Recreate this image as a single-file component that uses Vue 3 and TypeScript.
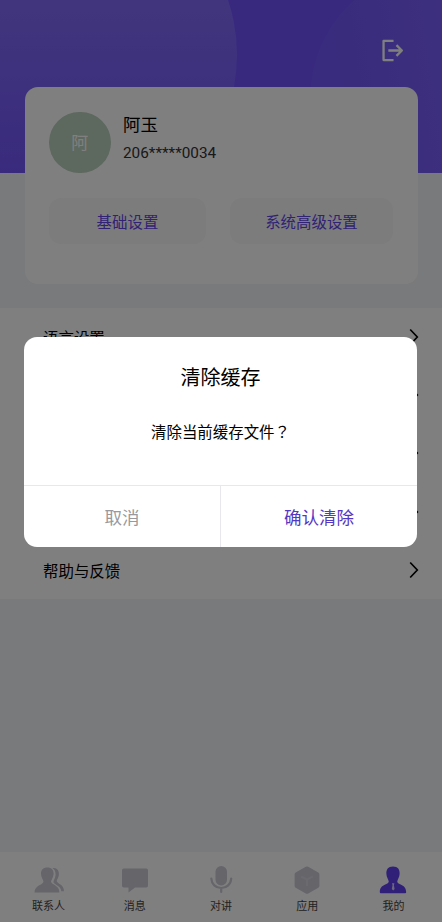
<script setup lang="ts">
import { ref } from 'vue'

const settings = ['语言设置', '字体大小', '清除缓存', '关于我们', '帮助与反馈']
const tabs = [
  { key: 'contacts', label: '联系人' },
  { key: 'message', label: '消息' },
  { key: 'talk', label: '对讲' },
  { key: 'apps', label: '应用' },
  { key: 'mine', label: '我的' },
]
const active = ref('mine')
const open = ref(true)
</script>

<template>
  <div class="screen">
    <header class="hero">
      <svg class="hero-bg" viewBox="0 0 442 173" aria-hidden="true">
        <defs>
          <linearGradient id="ga" x1="0" y1="0" x2="0" y2="173" gradientUnits="userSpaceOnUse">
            <stop offset="0" stop-color="#836cfa" />
            <stop offset="1" stop-color="#7355fc" />
          </linearGradient>
          <linearGradient id="gb" x1="310" y1="60" x2="442" y2="40" gradientUnits="userSpaceOnUse">
            <stop offset="0" stop-color="#7256fb" />
            <stop offset="1" stop-color="#7a5ffa" />
          </linearGradient>
        </defs>
        <circle cx="64" cy="55" r="173" fill="url(#ga)" />
        <circle cx="440" cy="98" r="130" fill="url(#gb)" />
      </svg>
      <svg class="logout" viewBox="0 0 24 24" aria-hidden="true">
        <path d="M13 2.8H3.4V21.2H13M8 12H21M15.8 6.8L21 12L15.8 17.2" />
      </svg>
    </header>

    <section class="card">
      <div class="user">
        <div class="avatar">阿</div>
        <div class="info">
          <div class="name">阿玉</div>
          <div class="phone">206*****0034</div>
        </div>
      </div>
      <div class="actions">
        <button class="pill basic">基础设置</button>
        <button class="pill advanced">系统高级设置</button>
      </div>
    </section>

    <ul class="list">
      <li v-for="s in settings" :key="s" class="row">
        <span>{{ s }}</span>
        <svg class="chevron" viewBox="0 0 10 18" aria-hidden="true"><path d="M1.2 1.5L8.3 9L1.2 16.5" /></svg>
      </li>
    </ul>

    <nav class="tabs">
      <div v-for="t in tabs" :key="t.key" class="tab" :class="{ active: active === t.key }" @click="active = t.key">
        <svg v-if="t.key === 'contacts'" class="icon" viewBox="0 0 30 30">
          <path d="M18.5 3.2C22.8 2.4 25.4 5.5 24.8 10C24.4 13 22.9 14.5 22.7 16C23 19 30 19 30 26.3H27.3C26.8 20.5 21 20.3 19.4 17.3C19.4 15 21.3 13.6 21.6 10C21.8 6.8 20.6 4.2 18.5 3.2Z" />
          <path d="M13.3 2.5C17.6 2.5 19.8 5.2 19.6 9C19.5 12.3 17.4 14.5 17 16.5C17.6 20.3 25.4 19.8 25.4 27.5H.5C.5 20 9 20.3 9.5 16.5C9.1 14.5 7.1 12.3 7 9C6.8 5.2 9 2.5 13.3 2.5Z" />
        </svg>
        <svg v-else-if="t.key === 'message'" class="icon" viewBox="0 0 30 30">
          <path d="M3.8 3.5H26.2Q28 3.5 28 5.3V20.7Q28 22.5 26.2 22.5H15L8.5 27.6V22.5H3.8Q2 22.5 2 20.7V5.3Q2 3.5 3.8 3.5Z" />
        </svg>
        <svg v-else-if="t.key === 'talk'" class="icon" viewBox="0 0 30 30">
          <rect x="9.5" y="1" width="11.5" height="19.5" rx="5.75" />
          <path class="line" d="M5.3 13.5C5.6 19.2 9.7 23 15.2 23S24.9 19.2 25.2 13.5M15.2 23V27" />
        </svg>
        <svg v-else-if="t.key === 'apps'" class="icon" viewBox="0 0 30 30">
          <path d="M13.8 1.8Q15 1.2 16.2 1.8L26.3 7.6Q27.4 8.3 27.4 9.6V20.8Q27.4 22.1 26.3 22.8L16.2 28.5Q15 29.2 13.8 28.5L3.7 22.8Q2.6 22.1 2.6 20.8V9.6Q2.6 8.3 3.7 7.6Z" />
          <path class="seam" d="M9.2 11.5L15 14.5L20.8 11.5M15 14.5V21" />
        </svg>
        <svg v-else class="icon" viewBox="0 0 30 30">
          <path d="M15 1.6C20 1.6 21.9 4.6 21.6 9C21.5 12.4 19.7 14.2 19.3 16.2C19 20.2 28.2 18.4 28.2 27.2Q28.2 28.2 27.2 28.2H2.8Q1.8 28.2 1.8 27.2C1.8 18.4 11 20.2 10.7 16.2C10.3 14.2 8.5 12.4 8.4 9C8.1 4.6 10 1.6 15 1.6Z" />
          <path class="tie" d="M14 18.3H16.4L15.9 20.3L16.6 24L15.2 25.6L13.8 24L14.5 20.3Z" />
        </svg>
        <span>{{ t.label }}</span>
      </div>
    </nav>

    <div v-if="open" class="mask">
      <div class="dialog">
        <h2>清除缓存</h2>
        <p>清除当前缓存文件<span class="mark">？</span></p>
        <div class="buttons">
          <button class="cancel" @click="open = false">取消</button>
          <button class="confirm" @click="open = false">确认清除</button>
        </div>
      </div>
    </div>
  </div>
</template>

<style>
body {
  margin: 0;
}
</style>

<style scoped>
.screen {
  position: relative;
  box-sizing: border-box;
  width: 442px;
  height: 922px;
  overflow: hidden;
  display: flex;
  flex-direction: column;
  background: #f0f4f8;
  color: #000;
  font-family: Roboto, 'Noto Sans CJK SC', sans-serif;
  font-size: 15.45px;
}
button {
  border: 0;
  padding: 0;
  background: none;
  font: inherit;
}
.hero {
  position: relative;
  flex: none;
  box-sizing: border-box;
  height: 173px;
  padding: 38px 37px 0 0;
  display: flex;
  justify-content: flex-end;
  align-items: flex-start;
  background: #7052ff;
}
.hero-bg {
  position: absolute;
  inset: 0;
  width: 442px;
  height: 173px;
}
.logout {
  position: relative;
  width: 25px;
  height: 25px;
  fill: none;
  stroke: #fff;
  stroke-width: 2.2;
  stroke-linejoin: round;
}
.card {
  position: relative;
  flex: none;
  box-sizing: border-box;
  height: 197px;
  margin: -86px 24.5px 0;
  padding: 24.5px;
  border-radius: 13px;
  background: #fff;
}
.user {
  display: flex;
  gap: 12.5px;
}
.avatar {
  width: 61.5px;
  height: 61.5px;
  border-radius: 50%;
  background: #bbd0bd;
  color: #fff;
  font-size: 17px;
  line-height: 63px;
  text-align: center;
}
.info {
  display: flex;
  flex-direction: column;
}
.name {
  font-size: 17.5px;
  line-height: 26px;
}
.phone {
  margin-top: 4px;
  font-size: 15.3px;
  line-height: 22px;
  color: #333;
}
.actions {
  display: flex;
  gap: 24px;
  margin-top: 24.5px;
}
.pill {
  height: 46px;
  padding-top: 1px;
  border-radius: 12px;
  background: #f8f8fa;
  color: #6344ea;
}
.basic {
  width: 157px;
}
.advanced {
  width: 163px;
}
.list {
  flex: none;
  margin: 24px 0 0;
  padding: 0;
  list-style: none;
  background: #fff;
}
.row {
  box-sizing: border-box;
  height: 58.2px;
  padding: 0 23px 0 43px;
  display: flex;
  align-items: center;
  justify-content: space-between;
}
.chevron {
  width: 10px;
  height: 18px;
  fill: none;
  stroke: #000;
  stroke-width: 1.7;
}
.tabs {
  box-sizing: border-box;
  height: 70px;
  margin-top: auto;
  padding: 13px 5.5px 0;
  display: flex;
  background: #fff;
}
.tab {
  flex: 1;
  display: flex;
  flex-direction: column;
  align-items: center;
  gap: 3px;
  font-size: 11px;
  line-height: 17px;
  color: #444;
}
.icon {
  width: 30px;
  height: 30px;
  fill: #cacad5;
}
.line {
  fill: none;
  stroke: #cacad5;
  stroke-width: 2.2;
  stroke-linecap: round;
}
.seam {
  fill: none;
  stroke: #d4d4de;
  stroke-width: 2;
}
.active .icon {
  fill: #6040ee;
}
.active .tie {
  fill: #d8d0fa;
}
.mask {
  position: absolute;
  inset: 0;
  background: rgba(0, 0, 0, 0.5);
  display: flex;
  align-items: center;
  justify-content: center;
  padding: 0 1px 38px 0;
}
.dialog {
  box-sizing: border-box;
  width: 393px;
  height: 210px;
  border-radius: 13px;
  background: #fff;
  display: flex;
  flex-direction: column;
  text-align: center;
  overflow: hidden;
}
h2 {
  margin: 26px 0 0;
  font-size: 20px;
  line-height: 30px;
  font-weight: 400;
}
p {
  margin: 27px 0 0;
  height: 22px;
  line-height: 22px;
}
.mark {
  font-family: 'Noto Sans CJK TC', sans-serif;
}
.buttons {
  display: flex;
  height: 62px;
  box-sizing: border-box;
  margin-top: auto;
  border-top: 1px solid #e8e8ec;
  font-size: 17.5px;
}
.buttons button {
  flex: 1;
}
.buttons .cancel {
  color: #99999d;
  border-right: 1px solid #e8e8ec;
}
.buttons .confirm {
  color: #5438c4;
}
</style>
